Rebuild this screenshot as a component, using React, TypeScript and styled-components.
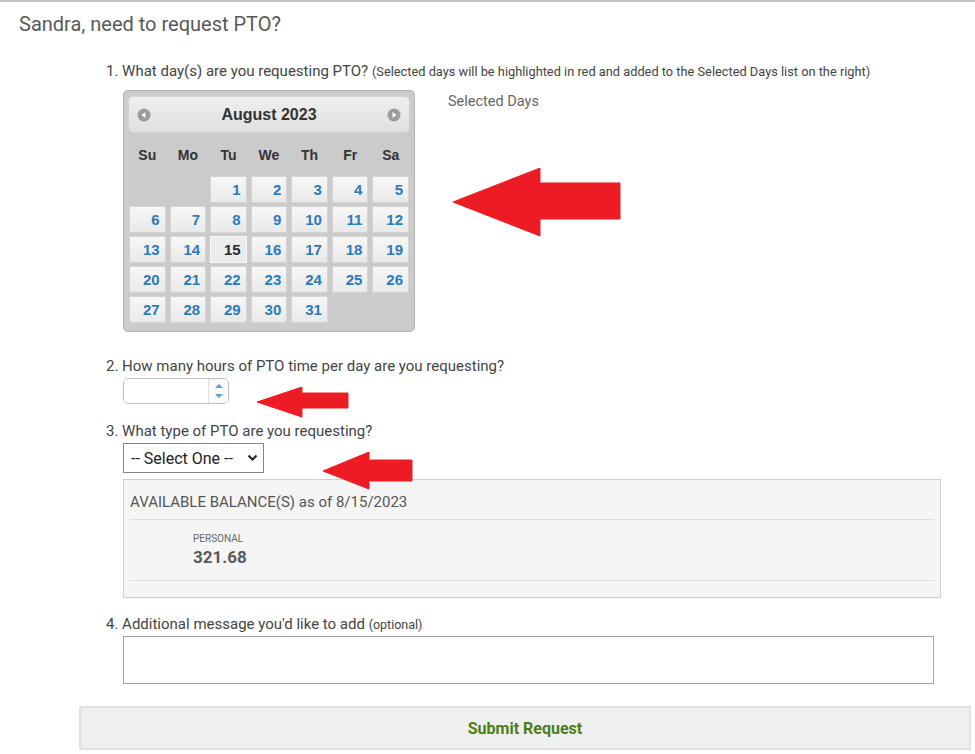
import React from 'react';
import styled, { createGlobalStyle } from 'styled-components';

const GlobalStyle = createGlobalStyle`
    html, body {
        margin:0;
        padding:0;
        background:#fff;
    }
    body {
        font-family: Roboto, "Liberation Sans", Arial, sans-serif;
        color:#444;
    }
`;

const Page = styled.div`
    width:975px;
    min-height:754px;
    box-sizing:border-box;
    border-top:2px solid #c4c4c4;
`;

const Title = styled.h1`
    margin:8px 0 0 19px;
    font-size:20px;
    line-height:28px;
    font-weight:400;
    color:#595959;
`;

const Form = styled.div`
    padding-left:106px;
    margin-top:24px;
`;

const Question = styled.div<{ $gap: number }>`
    position:relative;
    margin-top:${(p) => p.$gap}px;
`;

const Label = styled.div`
    font-size:15px;
    line-height:18px;
    color:#444;
`;

const Hint = styled.span<{ $size: number }>`
    font-size:${(p) => p.$size}px;
`;

const Field = styled.div<{ $gap: number }>`
    margin:${(p) => p.$gap}px 0 0 17px;
`;

const Arrow = styled.svg<{ $left: number; $top: number }>`
    position:absolute;
    left:${(p) => p.$left}px;
    top:${(p) => p.$top}px;
    z-index:2;
`;

// calendar
const CalendarRow = styled.div`
    display:flex;
    align-items:flex-start;
    gap:33px;
`;

const Calendar = styled.div`
    width:292px;
    box-sizing:border-box;
    border:1px solid #b3b3b3;
    border-radius:5px;
    background:#cbcbcb;
    padding:5px 4px 8px;
    font-family:"Liberation Sans", Arial, sans-serif;
`;

const CalHeader = styled.div`
    height:37px;
    box-sizing:border-box;
    border:1px solid #d2d2d2;
    border-radius:5px;
    background:linear-gradient(#efefef, #e0e0e0);
    display:flex;
    align-items:center;
    justify-content:space-between;
    padding:0 8px;
`;

const MonthName = styled.span`
    font-size:16px;
    font-weight:bold;
    color:#333;
`;

const WeekRow = styled.div`
    height:43px;
    display:grid;
    grid-template-columns:repeat(7, 1fr);
    column-gap:4px;
    align-items:center;
    padding:0 1px;
    font-size:14px;
    font-weight:bold;
    color:#333;
    text-align:center;
`;

const DaysGrid = styled.div`
    display:grid;
    grid-template-columns:repeat(7, 1fr);
    grid-auto-rows:27px;
    column-gap:4px;
    row-gap:3px;
    padding:0 1px;
`;

const Day = styled.div<{ $today?: boolean }>`
    box-sizing:border-box;
    border:1px solid ${(p) => (p.$today ? '#f7f7f7' : '#d4d4d4')};
    background:${(p) => (p.$today ? '#ececec' : 'linear-gradient(#f7f7f7, #e9e9e9)')};
    text-align:right;
    padding-right:5px;
    font-size:15px;
    font-weight:bold;
    line-height:25px;
    color:${(p) => (p.$today ? '#2a2a2a' : '#2b7bbf')};
`;

const SelectedDays = styled.div`
    margin-top:2px;
    font-size:14.5px;
    line-height:20px;
    color:#666;
`;

// hours input
const NumberBox = styled.div`
    width:106px;
    height:26px;
    box-sizing:border-box;
    border:1px solid #bdbdbd;
    border-radius:5px;
    display:flex;
    overflow:hidden;
`;

const NumberInput = styled.input`
    flex:1;
    min-width:0;
    border:none;
    outline:none;
    padding:0 6px;
    font-size:14px;
    font-family:Roboto, sans-serif;
`;

const Spinner = styled.div`
    width:19px;
    border-left:1px solid #dedede;
    background:#fafafa;
    display:flex;
    flex-direction:column;
    align-items:center;
    justify-content:center;
    gap:6px;
`;

const Tri = styled.span<{ $down?: boolean }>`
    width:0;
    height:0;
    border-left:4px solid transparent;
    border-right:4px solid transparent;
    ${(p) => (p.$down ? 'border-top:4px solid #5ba0d8;' : 'border-bottom:4px solid #5ba0d8;')}
`;

// select
const SelectWrap = styled.div`
    position:relative;
    width:141px;
    height:30px;
`;

const Select = styled.select`
    width:100%;
    height:100%;
    box-sizing:border-box;
    appearance:none;
    border:1px solid #858585;
    border-radius:0;
    background:#fff;
    padding:0 0 0 7px;
    font-family:Roboto, sans-serif;
    font-size:16px;
    color:#222;
`;

const Chevron = styled.svg`
    position:absolute;
    right:6px;
    top:11px;
    pointer-events:none;
`;

// balance box
const Balance = styled.div`
    width:818px;
    box-sizing:border-box;
    margin:6px 0 0 17px;
    border:1px solid #cfcfcf;
    background:#f5f5f5;
    padding:0 6px 16px;
`;

const BalanceHead = styled.div`
    padding-top:13px;
    font-size:15px;
    line-height:18px;
    color:#555;
`;

const Divider = styled.div<{ $gap: number }>`
    margin-top:${(p) => p.$gap}px;
    height:1px;
    background:#dddddd;
`;

const BalanceItem = styled.div`
    padding:13px 0 12px 63px;
`;

const BalanceType = styled.div`
    font-size:10px;
    line-height:12px;
    color:#666;
`;

const BalanceValue = styled.div`
    margin-top:1px;
    font-size:17px;
    line-height:22px;
    font-weight:bold;
    color:#595959;
`;

const Message = styled.textarea`
    display:block;
    width:811px;
    height:48px;
    box-sizing:border-box;
    border:1px solid #a3a3a3;
    resize:none;
    font-family:Roboto, sans-serif;
`;

const SubmitButton = styled.button`
    display:block;
    margin:22px 0 0 79px;
    width:892px;
    height:44px;
    border:2px solid #e0e0e0;
    background:#efefef;
    font-family:Roboto, sans-serif;
    font-size:16px;
    font-weight:bold;
    color:#4a7f17;
    cursor:pointer;
`;

const NavIcon = ({ next }: { next?: boolean }) => (
    <svg width="14" height="14" viewBox="0 0 14 14">
        <circle cx="7" cy="7" r="6.5" fill="#9b9b9b" />
        {next ? <polygon points="5.5,4 9.5,7 5.5,10" fill="#fff" /> : <polygon points="8.5,4 4.5,7 8.5,10" fill="#fff" />}
    </svg>
);

const weekDays = ['Su', 'Mo', 'Tu', 'We', 'Th', 'Fr', 'Sa'];
const cells: (number | null)[] = [null, null, ...Array.from({ length: 31 }, (_, i) => i + 1), null, null];

const App = () => {
    return (
        <Page>
            <GlobalStyle />
            <Title>Sandra, need to request PTO?</Title>
            <Form>
                <Question $gap={0}>
                    <Label>
                        1. What day(s) are you requesting PTO?{' '}
                        <Hint $size={12.8}>(Selected days will be highlighted in red and added to the Selected Days list on the right)</Hint>
                    </Label>
                    <Field $gap={9}>
                        <CalendarRow>
                            <Calendar>
                                <CalHeader>
                                    <NavIcon />
                                    <MonthName>August 2023</MonthName>
                                    <NavIcon next />
                                </CalHeader>
                                <WeekRow>
                                    {weekDays.map((d) => (
                                        <span key={d}>{d}</span>
                                    ))}
                                </WeekRow>
                                <DaysGrid>
                                    {cells.map((d, i) =>
                                        d ? (
                                            <Day key={i} $today={d === 15}>
                                                {d}
                                            </Day>
                                        ) : (
                                            <span key={i} />
                                        )
                                    )}
                                </DaysGrid>
                            </Calendar>
                            <SelectedDays>Selected Days</SelectedDays>
                        </CalendarRow>
                    </Field>
                    <Arrow $left={347} $top={106} width="168" height="69" viewBox="0 0 168 69">
                        <polygon points="0,34 87,0 87,15 167,15 167,51 87,51 87,68" fill="#ed1c24" strokeLinejoin="round" stroke="#ed1c24" strokeWidth="1" />
                    </Arrow>
                </Question>

                <Question $gap={25}>
                    <Label>2. How many hours of PTO time per day are you requesting?</Label>
                    <Field $gap={3}>
                        <NumberBox>
                            <NumberInput type="text" />
                            <Spinner>
                                <Tri />
                                <Tri $down />
                            </Spinner>
                        </NumberBox>
                    </Field>
                    <Arrow $left={151} $top={30} width="92" height="31" viewBox="0 0 92 31">
                        <polygon points="0,15 45,0 45,6 91,6 91,21 45,21 45,30" fill="#ed1c24" strokeLinejoin="round" stroke="#ed1c24" strokeWidth="1" />
                    </Arrow>
                </Question>

                <Question $gap={18}>
                    <Label>3. What type of PTO are you requesting?</Label>
                    <Field $gap={3}>
                        <SelectWrap>
                            <Select defaultValue="">
                                <option value="">-- Select One --</option>
                                <option value="personal">Personal</option>
                            </Select>
                            <Chevron width="11" height="8" viewBox="0 0 11 8">
                                <polyline points="1.5,1.5 5.5,5.5 9.5,1.5" fill="none" stroke="#222" strokeWidth="2" />
                            </Chevron>
                        </SelectWrap>
                    </Field>
                    <Balance>
                        <BalanceHead>AVAILABLE BALANCE(S) as of 8/15/2023</BalanceHead>
                        <Divider $gap={8} />
                        <BalanceItem>
                            <BalanceType>PERSONAL</BalanceType>
                            <BalanceValue>321.68</BalanceValue>
                        </BalanceItem>
                        <Divider $gap={0} />
                    </Balance>
                    <Arrow $left={217} $top={30} width="90" height="38" viewBox="0 0 90 38">
                        <polygon points="0,19 46,0 46,8 89,8 89,29 46,29 46,37" fill="#ed1c24" strokeLinejoin="round" stroke="#ed1c24" strokeWidth="1" />
                    </Arrow>
                </Question>

                <Question $gap={17}>
                    <Label>
                        4. Additional message you'd like to add <Hint $size={12.5}>(optional)</Hint>
                    </Label>
                    <Field $gap={2}>
                        <Message />
                    </Field>
                </Question>
            </Form>
            <SubmitButton>Submit Request</SubmitButton>
        </Page>
    );
};

export default App;
